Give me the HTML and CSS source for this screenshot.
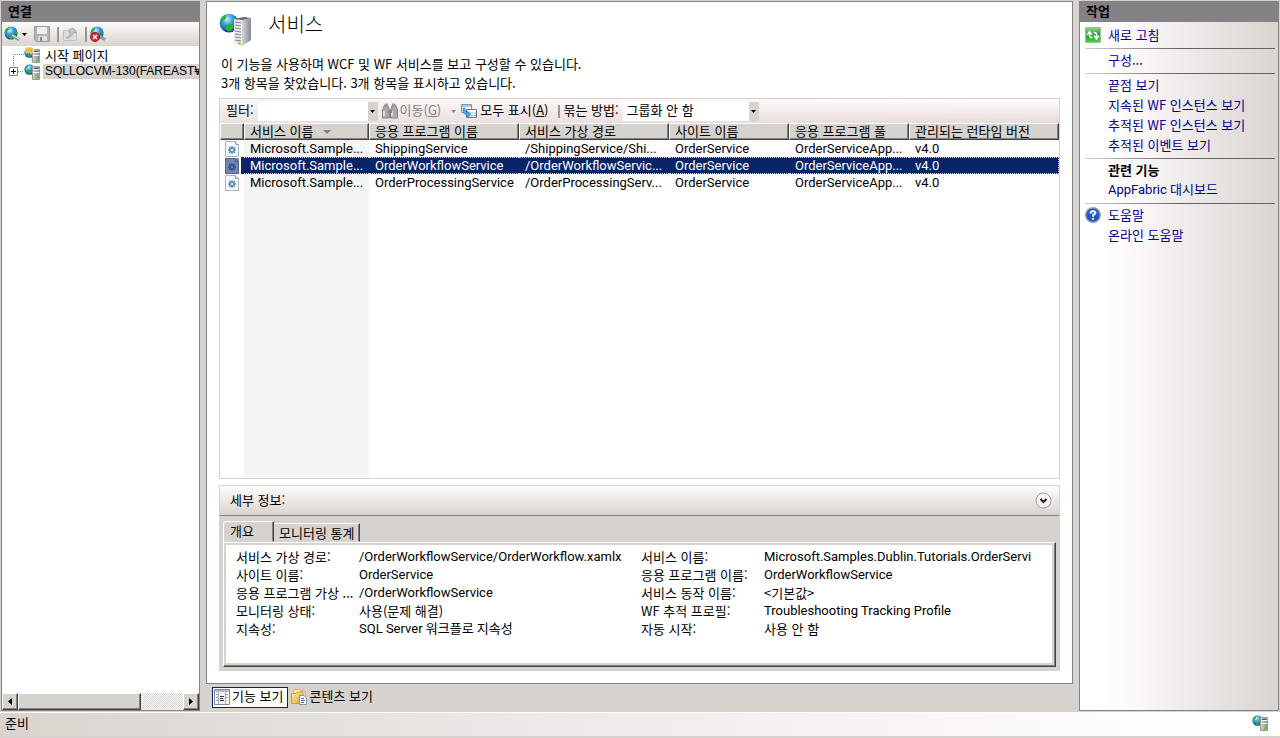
FILE: index.html
```html
<!DOCTYPE html>
<html lang="ko">
<head>
<meta charset="utf-8">
<title>서비스</title>
<link rel="stylesheet" href="styles.css">
</head>
<body>
<svg class="defs" aria-hidden="true">
  <defs>
    <radialGradient id="sea" cx="0.4" cy="0.3" r="0.75"><stop offset="0" stop-color="#bff0ff"/><stop offset="0.4" stop-color="#3f9fe0"/><stop offset="1" stop-color="#0a2a9a"/></radialGradient>
    <linearGradient id="case" x1="0" x2="1"><stop offset="0" stop-color="#d4d6d9"/><stop offset="1" stop-color="#85898e"/></linearGradient>
    <linearGradient id="folder" x1="0" y1="0" x2="1" y2="1"><stop offset="0" stop-color="#fff0b0"/><stop offset="1" stop-color="#dba233"/></linearGradient>
    <linearGradient id="leaf" x1="0" y1="0" x2="0" y2="1"><stop offset="0" stop-color="#8fd48a"/><stop offset="0.5" stop-color="#1f9a26"/><stop offset="1" stop-color="#3fe23a"/></linearGradient>
    <symbol id="globe" viewBox="0 0 16 16">
      <circle cx="8" cy="8" r="7.500" fill="url(#sea)"/>
      <path d="M1 6Q3 2 6 1.200L5.500 4L3.500 6L3 8.500ZM5 10L9 8.500L12 10.500Q11 13.500 8 15L5.500 13ZM12 3L15 7L14.500 10L12.500 7.500Z" fill="#27b52d"/>
    </symbol>
    <symbol id="server" viewBox="0 0 16 16">
      <use href="#globe" x="0" y="0" width="11" height="11"/>
      <path d="M8.500 2.500H15.500V15.500H8.500Z" fill="url(#case)" stroke="#9a9ea3"/>
      <path d="M9 5.500H15M9 8.500H15" stroke="#fff"/><path d="M10 4.500H14" stroke="#4b5056"/>
      <rect x="12" y="13" width="2" height="2" fill="#4be000"/>
    </symbol>
    <symbol id="home" viewBox="0 0 16 16">
      <use href="#server" width="16" height="16"/>
      <path d="M1 0L4 1.500L6 0L10 3L7 7L5.500 4.500L2 6Z" fill="#f6b52b" stroke="#fff0a0" stroke-width="0.700"/>
    </symbol>
    <symbol id="gear-page" viewBox="0 0 14 16">
      <path d="M0.500 0.500H10.500L13.500 3.500V15.500H0.500Z" fill="#f5faff" stroke="#aeb3ba"/><path d="M10.500 0.500V3.500H13.500" fill="#dfe5eb" stroke="#9aa0a8"/>
      <path d="M7 5V13M3 9H11M4 6L10 12M10 6L4 12" stroke="#5c8fc0" stroke-width="1.300"/>
      <circle cx="7" cy="9" r="2" fill="#f5faff" stroke="#4f84b8" stroke-width="1.400"/>
    </symbol>
  </defs>
</svg>

<div class="workspace">
  <section class="pane connections">
    <h2 class="pane-title">연결</h2>
    <div class="strip conn-tools">
      <button class="tool" aria-label="연결 만들기">
        <svg width="18" height="16" viewBox="0 0 18 16"><use href="#globe" x="0" y="0" width="14" height="14"/><path d="M8 9L11 11M9 12L11 11L15 14" stroke="#7c9cae" stroke-width="3" fill="none"/><path d="M8 9L15 13" stroke="#e4f1f6" fill="none"/></svg>
        <svg width="5" height="3" viewBox="0 0 5 3"><path d="M0 0H5L2.500 3Z"/></svg>
      </button>
      <button class="tool" aria-label="저장" disabled>
        <svg width="16" height="16" viewBox="0 0 16 16"><path d="M0.500 0.500H15.500V15.500H2.500L0.500 13.500Z" fill="#b4b4b4" stroke="#9a9a9a"/><path d="M3 1H13V8H3Z" fill="#eee"/><path d="M4 10H13V15H4Z" fill="#ddd"/><path d="M6 11H8V15H6Z" fill="#888"/></svg>
      </button>
      <i class="divider"></i>
      <button class="tool" aria-label="위로" disabled>
        <svg width="16" height="16" viewBox="0 0 16 16"><path d="M1.500 4.500H6L7 3H12L14.500 5V14.500H1.500Z" fill="#dcdcdc" stroke="#c0c0c0"/><path d="M4 12Q8 11 9 6H6.500L11 2L14 7L11 6.500Q10 12 4 12Z" fill="#c6c6c6" stroke="#adadad"/></svg>
      </button>
      <i class="divider"></i>
      <button class="tool" aria-label="연결 삭제">
        <svg width="17" height="16" viewBox="0 0 17 16"><use href="#globe" width="14" height="14"/><path d="M10 10L15 14" stroke="#7c9cae" stroke-width="3"/><circle cx="5" cy="11" r="4.500" fill="#d8262c" stroke="#a81c20"/><path d="M3 9L7 13M7 9L3 13" stroke="#fff" stroke-width="1.400"/></svg>
      </button>
    </div>
    <ul class="tree">
      <li><svg class="branch" width="22" height="17" viewBox="0 0 22 17"><path d="M11.500 8V17M11 8.500H22" stroke="#888" stroke-dasharray="1 1" fill="none"/></svg><svg class="i16"><use href="#home"/></svg><span>시작 페이지</span></li>
      <li><svg class="branch" width="22" height="17" viewBox="0 0 22 17"><path d="M11.500 0V4M16 8.500H22" stroke="#888" stroke-dasharray="1 1"/><path d="M7.500 4.500H15.500V12.500H7.500Z" fill="#fff" stroke="#808080"/><path d="M9 8.500H14M11.500 6V11" stroke="#000"/></svg><svg class="i16"><use href="#server"/></svg><span class="current">SQLLOCVM-130(FAREAST₩</span></li>
    </ul>
    <div class="scrollbar">
      <button class="sb-end" aria-label="왼쪽"><svg width="4" height="7" viewBox="0 0 4 7"><path d="M4 0V7L0 3.500Z"/></svg></button>
      <div class="sb-thumb"></div>
      <button class="sb-end" aria-label="오른쪽"><svg width="4" height="7" viewBox="0 0 4 7"><path d="M0 0V7L4 3.500Z"/></svg></button>
    </div>
  </section>

  <div class="center">
    <main class="feature">
      <header class="heading">
        <svg width="33" height="34" viewBox="0 0 33 34"><use href="#globe" width="20" height="20"/><path d="M15 6L23 7V33L15 30Z" fill="#e9ebed"/><path d="M16 9L22 10M16 12L22 13M16 15L22 16M16 18L22 19M16 21L22 22M16 24L22 25M16 27L22 28" stroke="#7c838c"/><path d="M23 7V33L32 27V5Z" fill="url(#case)"/><path d="M15 6L23 7L32 5L25 4Z" fill="#62676d"/><path d="M19 29L22 30V32L19 31Z" fill="#6fe020"/></svg>
        <h1>서비스</h1>
      </header>
      <p class="intro">이 기능을 사용하며 WCF 및 WF 서비스를 보고 구성할 수 있습니다.<br>3개 항목을 찾았습니다. 3개 항목을 표시하고 있습니다.</p>

      <div class="filterbar">
        <label for="filter">필터:</label>
        <span class="combo"><input id="filter" type="text"><button class="drop" aria-label="필터 목록"><svg width="5" height="3" viewBox="0 0 5 3"><path d="M0 0H5L2.500 3Z"/></svg></button></span>
        <button class="tool go" disabled>
          <svg width="16" height="16" viewBox="0 0 16 16"><path d="M2.500 2H5.500L7.500 7V15H0.500V7ZM10.500 2H13.500L15.500 7V15H8.500V7Z" fill="#aaa" stroke="#858585"/><path d="M3 0.500H6V4H3ZM10 0.500H13V4H10Z" fill="#999"/><path d="M2 8V13M10 8V13" stroke="#eee" stroke-width="1.500"/><path d="M6 7H10V10H6Z" fill="#888"/></svg>
          <span>이동(<u>G</u>)</span>
          <svg class="caret" width="5" height="3" viewBox="0 0 5 3"><path d="M0 0H5L2.500 3Z" fill="#888"/></svg>
        </button>
        <button class="tool all">
          <svg width="16" height="16" viewBox="0 0 16 16"><path d="M0.500 1.500H10.500V9.500H0.500Z" fill="#fff" stroke="#7796b8"/><path d="M1 3H10" stroke="#a9c4de" stroke-width="2"/><path d="M5.500 6.500H15.500V14.500H5.500Z" fill="#fff" stroke="#697889"/><path d="M7 10H9M10 10H12M13 10H15M7 12.500H9M10 12.500H12M13 12.500H15" stroke="#8fa2b7"/><path d="M2 5Q1 11 6 12V15L10 11L6 8V10Q4 9 4 5Z" fill="#43a5e8" stroke="#2276b8" stroke-width="0.500"/></svg>
          <span>모두 표시(<u>A</u>)</span>
        </button>
        <i class="divider"></i>
        <label for="group">묶는 방법:</label>
        <span class="combo group"><select id="group"><option>그룹화 안 함</option></select><i class="drop"><svg width="5" height="3" viewBox="0 0 5 3"><path d="M0 0H5L2.500 3Z"/></svg></i></span>
      </div>

      <div class="list">
        <table>
          <colgroup><col class="c-icon"><col class="c-name"><col class="c-wide"><col class="c-wide"><col class="c-mid"><col class="c-mid"><col></colgroup>
          <thead><tr><th></th><th>서비스 이름<svg class="sort" width="8" height="4" viewBox="0 0 8 4"><path d="M0 0H8L4 4Z" fill="#808080"/></svg></th><th>응용 프로그램 이름</th><th>서비스 가상 경로</th><th>사이트 이름</th><th>응용 프로그램 풀</th><th>관리되는 런타임 버전</th></tr></thead>
          <tbody class="latin">
            <tr><td><svg class="page"><use href="#gear-page"/></svg></td><td>Microsoft.Sample...</td><td>ShippingService</td><td>/ShippingService/Shi...</td><td>OrderService</td><td>OrderServiceApp...</td><td>v4.0</td></tr>
            <tr class="selected"><td><svg class="page"><use href="#gear-page"/><rect width="14" height="16" fill="#0a246a" opacity="0.550"/></svg></td><td>Microsoft.Sample...</td><td>OrderWorkflowService</td><td>/OrderWorkflowServic...</td><td>OrderService</td><td>OrderServiceApp...</td><td>v4.0</td></tr>
            <tr><td><svg class="page"><use href="#gear-page"/></svg></td><td>Microsoft.Sample...</td><td>OrderProcessingService</td><td>/OrderProcessingServ...</td><td>OrderService</td><td>OrderServiceApp...</td><td>v4.0</td></tr>
          </tbody>
        </table>
      </div>

      <section class="details">
        <header class="details-head"><h3>세부 정보:</h3>
          <button class="tool" aria-label="접기"><svg width="17" height="17" viewBox="0 0 17 17"><circle cx="8.500" cy="8.500" r="7.500" fill="#f4f3f5" stroke="#9c9aa4"/><path d="M5.500 7L8.500 10L11.500 7" fill="none" stroke="#222" stroke-width="2"/></svg></button>
        </header>
        <div class="tabs"><button class="tab on">개요</button><button class="tab">모니터링 통계</button></div>
        <div class="tabpage">
          <dl>
            <dt>서비스 가상 경로:</dt><dd class="latin">/OrderWorkflowService/OrderWorkflow.xamlx</dd>
            <dt>사이트 이름:</dt><dd class="latin">OrderService</dd>
            <dt>응용 프로그램 가상 ...</dt><dd class="latin">/OrderWorkflowService</dd>
            <dt>모니터링 상태:</dt><dd>사용(문제 해결)</dd>
            <dt>지속성:</dt><dd class="latin">SQL Server 워크플로 지속성</dd>
          </dl>
          <dl>
            <dt>서비스 이름:</dt><dd class="latin">Microsoft.Samples.Dublin.Tutorials.OrderServi</dd>
            <dt>응용 프로그램 이름:</dt><dd class="latin">OrderWorkflowService</dd>
            <dt>서비스 동작 이름:</dt><dd>&lt;기본값&gt;</dd>
            <dt>WF 추적 프로필:</dt><dd class="latin">Troubleshooting Tracking Profile</dd>
            <dt>자동 시작:</dt><dd>사용 안 함</dd>
          </dl>
        </div>
      </section>
    </main>
    <nav class="views">
      <button class="view on"><svg width="16" height="16" viewBox="0 0 16 16"><path d="M0.500 0.500H15.500V15.500H0.500Z" fill="#f4f4f4" stroke="#858c99"/><path d="M1 2H15" stroke="#aab9d0" stroke-width="2"/><path d="M4.500 3V15M11.500 3V15" stroke="#a5aab3"/><path d="M2 5.500H4M2 8.500H4M2 11.500H4M12 5.500H14M12 8.500H14" stroke="#9aa8bd"/><path d="M6 7.500H10M6 9.500H9M6 11.500H10" stroke="#333"/></svg><span>기능 보기</span></button>
      <button class="view"><svg width="16" height="16" viewBox="0 0 16 16"><path d="M3 0.500H9L10 2H14V9H3Z" fill="#fff8d5" stroke="#d4ac54"/><path d="M0.500 4.500H5L6 3H12V14.500H0.500Z" fill="url(#folder)" stroke="#d29a33"/><path d="M8.500 6.500H13L15.500 9V15.500H8.500Z" fill="#f5faff" stroke="#7c93ad"/><path d="M10 9.500H13M10 11.500H14M10 13.500H13" stroke="#3379c6"/></svg><span>콘텐츠 보기</span></button>
    </nav>
  </div>

  <aside class="pane actions">
    <h2 class="pane-title">작업</h2>
    <div class="action-list">
      <a href="#"><svg width="16" height="16" viewBox="0 0 16 16"><path d="M0.500 0.500H15.500V15.500H0.500Z" fill="url(#leaf)" stroke="#9ebd9c"/><path d="M7.500 10.500Q4.500 11 4.500 8V5M2 8L4.500 4.500L7 8M8.500 5.500Q11.500 5 11.500 8V11M9 8.500L11.500 12L14 8.500" stroke="#fff" stroke-width="1.500" fill="none"/></svg>새로 고침</a>
      <hr>
      <a href="#">구성...</a>
      <hr>
      <a href="#">끝점 보기</a>
      <a href="#">지속된 WF 인스턴스 보기</a>
      <a href="#">추적된 WF 인스턴스 보기</a>
      <a href="#">추적된 이벤트 보기</a>
      <hr>
      <h3>관련 기능</h3>
      <a class="latin" href="#">AppFabric 대시보드</a>
      <hr>
      <a href="#"><svg width="16" height="16" viewBox="0 0 16 16"><circle cx="8" cy="8" r="7.300" fill="#2456bd" stroke="#98a0ae" stroke-width="1.400"/><path d="M3 6Q8 0 13 6Q8 9 3 6Z" fill="#6f9ae6" opacity="0.700"/><path d="M5.700 6.200Q5.700 4 8 4Q10.300 4 10.300 6Q10.300 7.200 8 8.300V9.700" stroke="#fff" stroke-width="1.700" fill="none"/><circle cx="8" cy="11.800" r="1.100" fill="#fff"/></svg>도움말</a>
      <a href="#">온라인 도움말</a>
    </div>
  </aside>
</div>
<footer class="status"><span>준비</span><svg class="i16"><use href="#server"/></svg></footer>
</body>
</html>
```
FILE: styles.css
```css
* { box-sizing: border-box; }
body {
  margin: 0;
  height: 100vh;
  display: flex;
  flex-direction: column;
  background: #d6d3ce;
  color: #000;
  font: 13px/16px "Noto Sans CJK KR", sans-serif;
  overflow: hidden;
}
h1, h2, h3, p, ul, dl, dd { margin: 0; padding: 0; }
svg { display: block; flex: none; }
.defs { position: absolute; width: 0; height: 0; }
button, input, select { font: inherit; color: inherit; border: 0; padding: 0; margin: 0; background: none; border-radius: 0; }
.i16 { width: 16px; height: 16px; }
.latin { font-family: Roboto, "Noto Sans CJK KR", sans-serif; }

.workspace {
  flex: 1;
  min-height: 0;
  display: grid;
  grid-template-columns: 199px minmax(0, 1fr) 200px;
  gap: 6px;
  padding: 1px 1px 0;
}
.pane { border: 1px solid #848284; display: flex; flex-direction: column; min-height: 0; min-width: 0; margin-bottom: 1px; }
.pane-title { background: #848284; font-size: 13px; line-height: 18px; height: 20px; padding-left: 6px; font-weight: 700; flex: none; }
.connections { background: #fff; }
.strip { background: linear-gradient(#fcfafa, #d9d3ce); }
.conn-tools { display: flex; align-items: center; height: 24px; padding-left: 2px; flex: none; }
.tool { display: flex; align-items: center; }
.conn-tools .tool { margin-right: 7px; }
.divider { width: 2px; height: 15px; background: #9a9898; flex: none; }
.conn-tools .divider { margin-right: 3px; }
.tree { flex: 1; list-style: none; overflow: hidden; }
.tree li { display: flex; height: 17px; align-items: center; white-space: nowrap; }
.tree span { padding: 0 2px; margin-left: 3px; line-height: 15px; }
.tree .current { background: #d6d3ce; font-family: "Liberation Sans", "Noto Sans CJK KR", sans-serif; font-size: 12px; }

.scrollbar { display: flex; height: 17px; background: repeating-conic-gradient(#d6d3ce 0 25%, #fff 0 50%) 0 0 / 2px 2px; }
.sb-end, .sb-thumb { background: #d6d3ce; border: 1px solid; border-color: #fff #424142 #424142 #fff; box-shadow: inset -1px -1px #848284; }
.sb-end { width: 16px; display: grid; place-items: center; }
.sb-thumb { width: 123px; margin-right: auto; }

.center { display: flex; flex-direction: column; min-width: 0; min-height: 0; }
.feature { flex: 1; min-height: 0; background: #fff; border: 1px solid #848284; padding: 11px 12px 12px; display: flex; flex-direction: column; }
.heading { display: flex; gap: 16px; height: 41px; }
.heading h1 { font-size: 20px; line-height: 22px; font-weight: 300; }
.intro { line-height: 19px; padding-left: 2px; white-space: nowrap; }

.filterbar { display: flex; align-items: center; height: 25px; margin-top: 6px; padding-left: 6px; border: 1px solid #d6d3ce; border-bottom: 0; background: linear-gradient(90deg, #f4e8ea66, #fff0), linear-gradient(#fffdfd, #e6dcda); white-space: nowrap; flex: none; }
.filterbar label, .filterbar .tool span { flex: none; padding-bottom: 2px; }
.combo { display: flex; height: 19px; width: 120px; margin-left: 4px; background: #fff; flex: none; }
.combo input, .combo select { flex: 1; min-width: 0; appearance: none; outline: 0; }
.combo.group { width: 136px; margin-left: 4px; }
.combo select { padding: 0 0 2px 4px; }
.drop { width: 10px; background: #d6d3ce; display: grid; place-items: center; pointer-events: none; }
.go { color: #848284; gap: 2px; margin-left: 4px; }
.go .caret { margin-left: 8px; }
.all { gap: 3px; margin-left: 5px; }
.filterbar .divider { margin: 0 3px 0 10px; height: 13px; }

.list { flex: 1; min-height: 0; border: 1px solid #d6d3ce; border-top: 0; background: linear-gradient(90deg, #fff 24px, #f5f5f5 24px 149px, #fff 149px); }
table { width: 100%; table-layout: fixed; border-collapse: separate; border-spacing: 0; }
.c-icon { width: 24px; }
.c-name { width: 125px; }
.c-wide { width: 150px; }
.c-mid { width: 120px; }
th { height: 17px; padding: 0 0 1px 5px; text-align: left; font-weight: 400; line-height: 12px; background: #d6d3ce; border: 1px solid; border-color: #fff #424142 #424142 #fff; box-shadow: inset -1px -1px #848284; white-space: nowrap; }
.sort { display: inline-block; margin-left: 10px; vertical-align: middle; }
td { height: 17px; padding: 0 0 0 6px; line-height: 15px; white-space: nowrap; }
td:first-child { padding-left: 5px; }
.page { width: 14px; height: 16px; }
.selected td { color: #fff; background: #0a246a; border: 0 dotted #e8d9a0; border-width: 1px 0; line-height: 13px; }
.selected td:first-child { background: linear-gradient(90deg, #fff 21px, #0a246a 21px); border: 0; }
.selected td:last-child { border-right-width: 1px; }

.details { margin-top: 6px; border: 1px solid #d6d3ce; background: #d6d3ce; display: flex; flex-direction: column; flex: none; }
.details-head { height: 30px; display: flex; align-items: center; justify-content: space-between; padding: 0 7px 0 10px; background: linear-gradient(#fffcfc, #d9d3ce); border-bottom: 1px solid #848284; }
.details-head h3 { font-size: 13px; font-weight: 400; padding-bottom: 2px; }
.tabs { display: flex; align-items: flex-end; height: 26px; padding-left: 3px; }
.tab { height: 19px; padding: 0 5px 0 4px; border: 1px solid; border-color: #fff #424142 transparent transparent; box-shadow: inset -1px 0 #848284; line-height: 16px; }
.tab.on { width: 51px; height: 21px; text-align: left; border-left-color: #fff; border-radius: 3px 0 0; padding: 0 6px 2px; }
.tabpage { display: grid; grid-template-columns: 405px minmax(0, 1fr); height: 125px; margin: 0 3px 3px; padding: 5px 12px; background: #fff; border: 1px solid; border-color: #fff #424142 #424142 #fff; box-shadow: inset -1px -1px #848284, inset -3px -3px #d6d3ce, inset 2px 2px #d6d3ce; white-space: nowrap; }
dl { display: grid; grid-template-columns: 123px minmax(0, 1fr); grid-auto-rows: 18px; line-height: 18px; }

.views { display: flex; height: 28px; padding: 3px 6px 4px; gap: 1px; }
.view { display: flex; align-items: center; gap: 2px; border: 1px solid transparent; padding: 0 4px 1px 1px; }
.view span { padding-bottom: 2px; }
.view.on { background: #fff; border-color: #0a246a; }

.action-list { flex: 1; padding: 4px 3px 0 5px; background: linear-gradient(90deg, #fff 10%, #fbf7f9 30%, #ece8e7 60%, #dad4ce); }
.action-list a, .action-list h3 { display: flex; align-items: center; gap: 7px; height: 20px; padding: 0 0 2px 23px; color: #00008b; text-decoration: none; font-size: 13px; }
.action-list a:has(svg) { padding-left: 0; }
.action-list h3 { color: #000; font-weight: 700; }
.action-list hr { height: 1px; border: 0; margin: 2px 0; background: linear-gradient(90deg, #d0cfd0, #636163 50%); }

.status { flex: none; height: 26px; display: flex; justify-content: space-between; align-items: center; padding: 0 12px 4px 5px; border-top: 1px solid #fff; border-bottom: 2px solid #d6d3ce; background: linear-gradient(90deg, #dad4ce, #ece8e7 40%, #fbf7f9 75%, #fff 95%); }
```
